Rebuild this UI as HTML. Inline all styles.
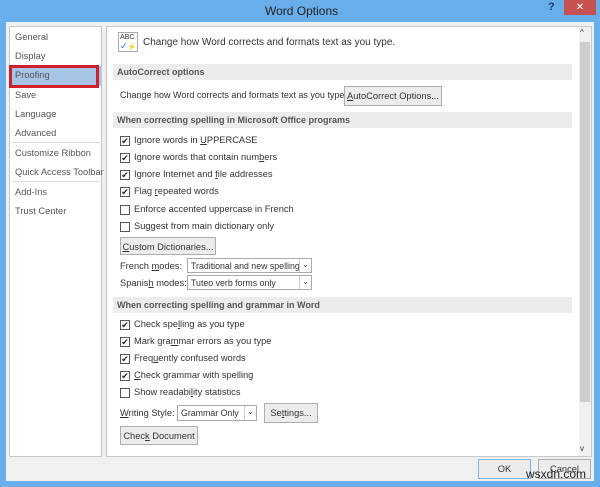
<!DOCTYPE html>
<html><head><style>
*{margin:0;padding:0;box-sizing:border-box}
body{width:600px;height:487px;background:#67aeea;font-family:"Liberation Sans",sans-serif;font-size:9.3px;color:#333;position:relative;overflow:hidden}
.a{position:absolute;white-space:nowrap}
.frame{left:6px;top:22px;width:588px;height:459px;background:#f0f0f0}
.left{left:9px;top:26px;width:93px;height:431px;background:#fff;border:1px solid #c8c8c8}
.right{left:106px;top:26px;width:486px;height:431px;background:#fff;border:1px solid #c8c8c8}
.nav{left:15px;color:#555;font-size:9.3px}
.hd{left:113px;width:459px;height:16px;background:#ececec;font-weight:bold;color:#555;padding:3px 0 0 4px;font-size:9px}
.cb{left:120px;width:10px;height:10px;border:1px solid #555;background:#fff;font-size:9px;line-height:8px;text-align:center;color:#222}
.t{left:134px}
.btn{border:1px solid #adadad;background:#ececec;text-align:center;padding-top:4px}
.sel{border:1px solid #aaa;background:#fff;padding:2px 3px;font-size:8.8px}
.dd{position:absolute;right:0;top:0;width:12px;height:100%;border-left:1px solid #ccc;background:#fff;font-size:8px;text-align:center;line-height:12px}
u{text-decoration:underline}
</style></head><body>
<div class="a" style="left:265px;top:4px;font-size:12px;color:#222">Word Options</div>
<div class="a" style="left:548px;top:1px;font-size:11px;font-weight:bold;color:#1a3a6a">?</div>
<div class="a" style="left:564px;top:0;width:32px;height:15px;background:#c75050;color:#fff;text-align:center;font-size:10px;line-height:15px">✕</div>
<div class="a frame"></div>
<div class="a left"></div>
<div class="a right"></div>
<div class="a" style="left:10px;top:66px;width:91px;height:20px;background:#a5c4e6"></div>
<div class="a" style="left:9px;top:65px;width:90px;height:23px;border:3px solid #d0202e"></div>
<div class="a nav" style="top:32px">General</div>
<div class="a nav" style="top:51px">Display</div>
<div class="a nav" style="top:70px">Proofing</div>
<div class="a nav" style="top:90px">Save</div>
<div class="a nav" style="top:109px">Language</div>
<div class="a nav" style="top:128px">Advanced</div>
<div class="a" style="left:12px;top:142px;width:88px;height:1px;background:#ddd"></div>
<div class="a nav" style="top:148px">Customize Ribbon</div>
<div class="a nav" style="top:167px">Quick Access Toolbar</div>
<div class="a" style="left:12px;top:181px;width:88px;height:1px;background:#ddd"></div>
<div class="a nav" style="top:187px">Add-Ins</div>
<div class="a nav" style="top:206px">Trust Center</div>
<div class="a" style="left:118px;top:32px;width:20px;height:20px;border:1px solid #aaa;font-size:7px;color:#333;padding:1px">ABC<br><span style="color:#2a6fc9;font-size:9px">✓</span><span style="color:#e8a020">⚡</span></div>
<div class="a" style="left:143px;top:37px;font-size:10px">Change how Word corrects and formats text as you type.</div>
<div class="a" style="left:579px;top:27px;width:12px;height:429px;background:#f0f0f0"></div>
<div class="a" style="left:580px;top:42px;width:10px;height:360px;background:#cdcdcd"></div>
<div class="a" style="left:580px;top:28px;font-size:8px">^</div>
<div class="a" style="left:580px;top:444px;font-size:8px">v</div>
<div class="a hd" style="top:64px">AutoCorrect options</div>
<div class="a" style="left:120px;top:90px;font-size:9px">Change how Word corrects and formats text as you type:</div>
<div class="a btn" style="left:344px;top:86px;width:98px;height:20px"><u>A</u>utoCorrect Options...</div>
<div class="a hd" style="top:112px">When correcting spelling in Microsoft Office programs</div>
<div class="a cb" style="top:136px">✔</div><div class="a t" style="top:135px">Ignore words in <u>U</u>PPERCASE</div>
<div class="a cb" style="top:153px">✔</div><div class="a t" style="top:152px">Ignore words that contain num<u>b</u>ers</div>
<div class="a cb" style="top:170px">✔</div><div class="a t" style="top:169px">Ignore Internet and <u>f</u>ile addresses</div>
<div class="a cb" style="top:187px">✔</div><div class="a t" style="top:186px">Flag <u>r</u>epeated words</div>
<div class="a cb" style="top:205px"></div><div class="a t" style="top:204px">Enforce accented uppercase in French</div>
<div class="a cb" style="top:222px"></div><div class="a t" style="top:221px">Suggest from main dictionary only</div>
<div class="a btn" style="left:120px;top:237px;width:96px;height:18px"><u>C</u>ustom Dictionaries...</div>
<div class="a" style="left:120px;top:261px">French <u>m</u>odes:</div>
<div class="a sel" style="left:187px;top:258px;width:125px;height:15px">Traditional and new spellings<span class="dd">⌄</span></div>
<div class="a" style="left:120px;top:278px">Spanis<u>h</u> modes:</div>
<div class="a sel" style="left:187px;top:275px;width:125px;height:15px">Tuteo verb forms only<span class="dd">⌄</span></div>
<div class="a hd" style="top:297px">When correcting spelling and grammar in Word</div>
<div class="a cb" style="top:320px">✔</div><div class="a t" style="top:319px">Check spe<u>l</u>ling as you type</div>
<div class="a cb" style="top:337px">✔</div><div class="a t" style="top:336px">Mark gra<u>m</u>mar errors as you type</div>
<div class="a cb" style="top:354px">✔</div><div class="a t" style="top:353px">Freq<u>u</u>ently confused words</div>
<div class="a cb" style="top:371px">✔</div><div class="a t" style="top:370px"><u>C</u>heck grammar with spelling</div>
<div class="a cb" style="top:388px"></div><div class="a t" style="top:387px">Show readabi<u>l</u>ity statistics</div>
<div class="a" style="left:120px;top:408px"><u>W</u>riting Style:</div>
<div class="a sel" style="left:177px;top:405px;width:80px;height:16px">Grammar Only<span class="dd">⌄</span></div>
<div class="a btn" style="left:264px;top:403px;width:54px;height:20px">Se<u>t</u>tings...</div>
<div class="a btn" style="left:120px;top:426px;width:78px;height:19px">Chec<u>k</u> Document</div>
<div class="a btn" style="left:478px;top:459px;width:53px;height:20px;border-color:#7eb4ea">OK</div>
<div class="a btn" style="left:538px;top:459px;width:53px;height:20px">Cancel</div>
<div class="a" style="left:526px;top:469px;font-size:12px;color:#222;line-height:11px">wsxdn.com</div>
</body></html>
